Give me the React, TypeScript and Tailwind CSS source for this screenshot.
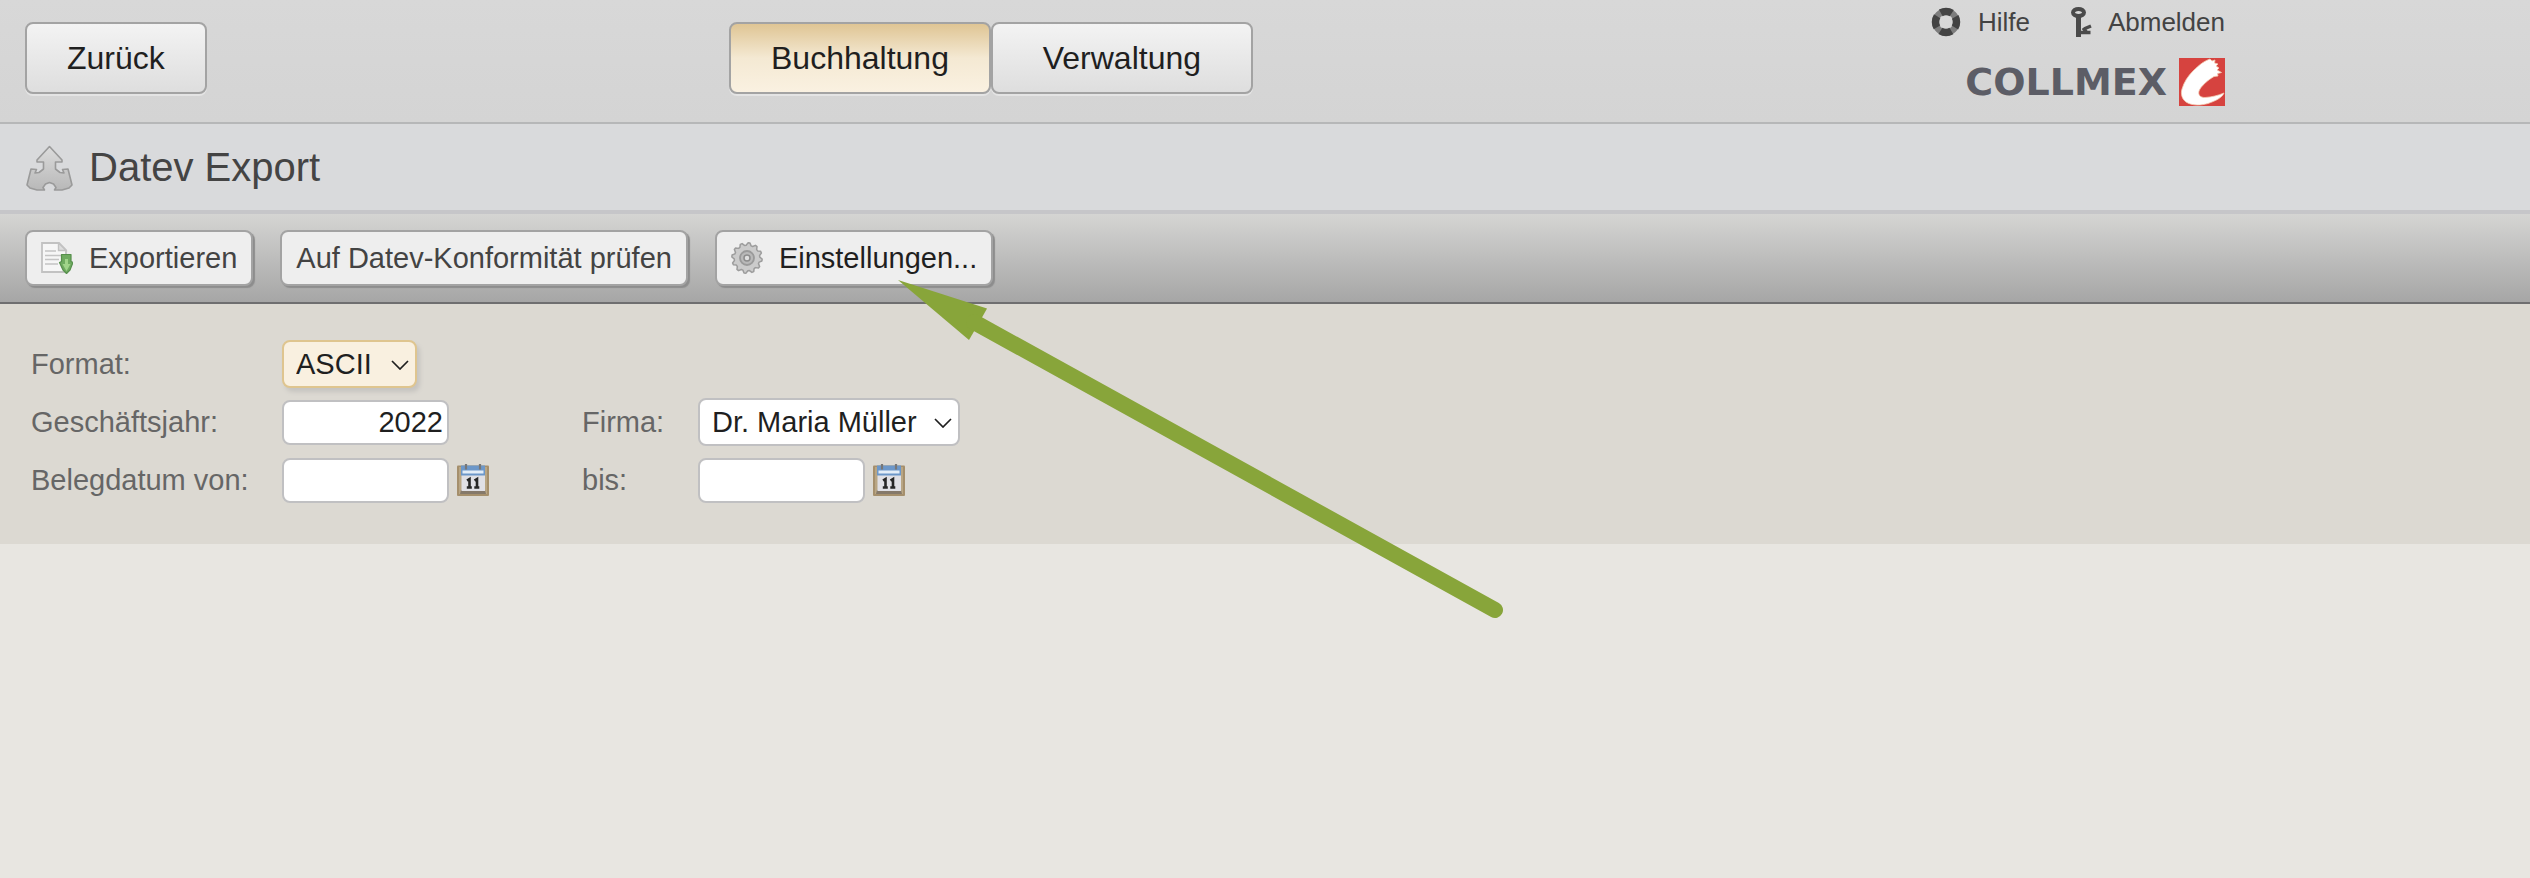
import type { ReactNode } from "react";

function LifebuoyIcon() {
  return (
    <svg className="size-8" viewBox="0 0 32 32" fill="none" aria-hidden="true">
      <circle cx="16" cy="16" r="10.5" stroke="#7d7d7d" strokeWidth="6.500" />
      <circle
        cx="16"
        cy="16"
        r="10.5"
        stroke="#434343"
        strokeWidth="7.500"
        strokeDasharray="11.5 4.993"
        strokeDashoffset="5.75"
      />
    </svg>
  );
}

function KeyIcon() {
  return (
    <svg className="size-8" viewBox="0 0 32 32" fill="none" stroke="#4a4a4a" aria-hidden="true">
      <ellipse cx="12.500" cy="6.500" rx="5.500" ry="3.600" strokeWidth="4" />
      <path d="M12.500 10v21" strokeWidth="5" />
      <path d="M14 26.500h10.500M17 22l3.500 4M25 20l-6 2.500" strokeWidth="3.400" />
    </svg>
  );
}

function LogoMark() {
  return (
    <svg className="h-12 w-[46px]" viewBox="0 0 46 48" aria-hidden="true">
      <rect width="46" height="48" fill="#d6433f" />
      <path
        d="M31 1 33 3 36 2 35.500 5 39 6 37 8 40 10 38 12 42.500 14.500 38.500 15.500 39 18 35 18.500C29 22 22 28 20 33 19 37 21 39.500 26 39.500 33 39 39 37.500 45 35 43 40 36 43 29 45.500 22 47.500 13 48 7 44 3 41 1.500 36 3 31 5 24 9 18 14 13 20 7 25 3 31 1Z"
        fill="#fff"
        stroke="#f4cdb4"
        strokeWidth=".8"
      />
    </svg>
  );
}

function ExportArrowsIcon() {
  return (
    <svg className="size-12" viewBox="0 0 48 48" aria-hidden="true">
      <defs>
        <linearGradient id="arrows" x1="0" y1="0" x2="0" y2="1">
          <stop offset="0" stopColor="#dcdcdc" />
          <stop offset="1" stopColor="#b8b8b8" />
        </linearGradient>
      </defs>
      <path
        d="M24.500 3.500 37 17V19H30.500V26L35 29.500 39 30 37.500 26.500 43 26 47 42 44 45 37 47H29.500L31 44.500 28.500 41 24.500 39.500 20.500 41 18 44.500 19.500 47H12L5 45 2 42 6 26 11.500 26.500 10 30 14 29.500 18.500 26V19H12V17Z"
        fill="url(#arrows)"
        stroke="#9a9a9a"
        strokeWidth="1.600"
        strokeLinejoin="round"
      />
    </svg>
  );
}

function DocumentExportIcon() {
  return (
    <svg className="size-8" viewBox="0 0 32 32" aria-hidden="true">
      <path d="M1 1h17l7 7v22H1Z" fill="#f6f6f6" stroke="#c2c2c2" strokeWidth="1.800" />
      <path d="M17.500 1v7.500H25Z" fill="#ddd" stroke="#c2c2c2" strokeWidth="1.400" />
      <path d="M4 9h11M4 13.500h16M4 17.500h14M4 22h13" stroke="#c4c4c4" strokeWidth="1.700" />
      <path
        d="M20.500 12.500H30V19.500L32 20.500 29 28 25.500 31.500 22 28 18.500 20.500 20.500 19.500Z"
        fill="#6fab60"
        stroke="#568f4c"
        strokeWidth="1.200"
        strokeLinejoin="round"
      />
      <path d="M24 17H27V22H29.500L25.500 29 21.500 22H24Z" fill="#a0d489" />
    </svg>
  );
}

const GEAR_TEETH = 12;
const gearOutline = Array.from({ length: GEAR_TEETH * 4 }, (_, i) => {
  const angle = ((i + 0.5) / (GEAR_TEETH * 4)) * Math.PI * 2;
  const radius = i % 4 < 2 ? 15.2 : 12.8;
  return `${(16 + radius * Math.cos(angle)).toFixed(2)},${(16 + radius * Math.sin(angle)).toFixed(2)}`;
}).join(" ");

function GearIcon() {
  return (
    <svg className="size-8" viewBox="0 0 32 32" fill="none" aria-hidden="true">
      <polygon points={gearOutline} fill="#cbcbcb" stroke="#9c9c9c" strokeWidth="1.500" strokeLinejoin="round" />
      <circle cx="16" cy="16" r="7" fill="#b9b9b9" stroke="#9a9a9a" strokeWidth="1.800" />
      <circle cx="16" cy="16" r="3" fill="#dedede" stroke="#8c8c8c" strokeWidth="1.500" />
    </svg>
  );
}

function CalendarIcon() {
  return (
    <svg className="size-8" viewBox="0 0 32 32" aria-hidden="true">
      <rect y="1.500" width="32" height="30.500" rx="1" fill="#a58f6c" />
      <rect x="2" y="3" width="28" height="27" fill="#b9a684" />
      <path d="M4 26h24l1 4H3Z" fill="#85796a" />
      <rect x="4.500" y="2" width="23.500" height="25" fill="#e0e0e5" />
      <rect x="4" y="1.500" width="24" height="10" fill="#6c97c9" />
      <rect x="5.500" y="6.500" width="21" height="3" fill="#e3edf7" />
      <path d="M9 0v5.500M23 0v5.500" stroke="#777" strokeWidth="2.200" />
      <path
        d="M10 16.500l2.500-1.500v8.500M9.800 23.500h5M17.500 16.500l2.500-1.500v8.500M17.300 23.500h5"
        fill="none"
        stroke="#262626"
        strokeWidth="2.600"
      />
    </svg>
  );
}

function NavButton({ children, active = false }: { children: ReactNode; active?: boolean }) {
  const tone = active
    ? "bg-linear-to-b from-[#dfc594] via-[#f4e9d3] via-50% to-[#faf1e1]"
    : "bg-linear-to-b from-[#f3f3f3] to-[#dedede]";
  return (
    <button
      type="button"
      className={`h-[72px] rounded-lg border-2 border-[#a3a3a3] px-10 text-[32px] leading-9 text-[#1f1f1f] shadow-[0_2px_0_#e4e4e4] ${tone}`}
    >
      {children}
    </button>
  );
}

function ToolButton({ children, icon, hovered = false }: { children: ReactNode; icon?: ReactNode; hovered?: boolean }) {
  return (
    <button
      type="button"
      className={`flex h-14 items-center gap-4 rounded-lg border-2 border-[#a3a3a3] bg-[#eee] px-3.5 leading-8 shadow-[2px_2px_1px_#8d8d8d] ${
        hovered ? "text-[#1f1f1f]" : "text-[#434343]"
      }`}
    >
      {icon}
      {children}
    </button>
  );
}

function Dropdown({ id, value, className }: { id: string; value: string; className: string }) {
  return (
    <div className="relative">
      <select
        id={id}
        defaultValue={value}
        className={`block h-12 appearance-none rounded-lg border-2 pl-3 leading-8 text-[#1f1f1f] ${className}`}
      >
        <option>{value}</option>
      </select>
      <svg
        className="pointer-events-none absolute top-5 right-2 h-2.5 w-[18px]"
        viewBox="0 0 18 10"
        fill="none"
        stroke="#1f1f1f"
        strokeWidth="1.700"
        aria-hidden="true"
      >
        <path d="M1 1l8 8 8-8" />
      </svg>
    </div>
  );
}

function TextField({ id, value }: { id: string; value?: string }) {
  return (
    <input
      id={id}
      type="text"
      defaultValue={value}
      className="h-[45px] w-[167px] rounded-lg border-2 border-[#c0c0c2] bg-white px-1 text-right leading-8 text-[#1f1f1f]"
    />
  );
}

function DateField({ id, label }: { id: string; label: string }) {
  return (
    <div className="flex items-center gap-2">
      <TextField id={id} />
      <button type="button" aria-label={label}>
        <CalendarIcon />
      </button>
    </div>
  );
}

export default function App() {
  return (
    <div className="relative min-h-screen overflow-x-hidden bg-[#e8e6e1] font-['Liberation_Sans',Arial,sans-serif] text-[29px] leading-8">
      <header className="border-b-2 border-[#b6b7b8] bg-linear-to-b from-[#d8d8d8] to-[#d4d4d4] px-[25px]">
        <div className="grid h-[122px] max-w-[2200px] grid-cols-[32%_1fr_auto]">
          <div className="pt-[22px]">
            <NavButton>Zurück</NavButton>
          </div>
          <nav className="flex pt-[22px]">
            <div className="grid grid-cols-2 self-start">
              <NavButton active>Buchhaltung</NavButton>
              <NavButton>Verwaltung</NavButton>
            </div>
          </nav>
          <div className="flex flex-col items-end gap-4 pt-1.5">
            <div className="flex h-8 items-center gap-9 text-[26px] text-[#434343]">
              <a href="#hilfe" className="flex items-center gap-4">
                <LifebuoyIcon />
                Hilfe
              </a>
              <a href="#abmelden" className="flex items-center gap-2.5">
                <KeyIcon />
                Abmelden
              </a>
            </div>
            <a
              href="#start"
              className="flex h-14 items-center gap-3 font-['DejaVu_Sans',sans-serif] text-[38px] leading-10 font-bold text-[#5c5d66]"
            >
              COLLMEX
              <LogoMark />
            </a>
          </div>
        </div>
      </header>

      <div className="flex h-[90px] items-center gap-4 border-b-4 border-[#c6c6c9] bg-[#d9dadc] px-[25px]">
        <ExportArrowsIcon />
        <h1 className="text-[40px] leading-[48px] text-[#444]">Datev Export</h1>
      </div>

      <div className="flex h-[90px] items-start gap-[27px] border-b-2 border-[#6f6f70] bg-linear-to-b from-[#d5d5d3] to-[#a6a6a6] px-[25px] pt-4">
        <ToolButton icon={<DocumentExportIcon />}>Exportieren</ToolButton>
        <ToolButton>Auf Datev-Konformität prüfen</ToolButton>
        <ToolButton icon={<GearIcon />} hovered>
          Einstellungen...
        </ToolButton>
      </div>

      <form className="grid auto-rows-[58px] grid-cols-[251px_300px_116px_1fr] items-center bg-[#dcd9d2] px-[31px] pt-[31px] pb-[35px] text-[#666]">
        <label htmlFor="format">Format:</label>
        <div className="col-span-3 flex">
          <Dropdown
            id="format"
            value="ASCII"
            className="w-[135px] border-[#dfc58f] bg-[#f9f0e0] shadow-[3px_4px_4px_#c6c4c0]"
          />
        </div>

        <label htmlFor="geschaeftsjahr">Geschäftsjahr:</label>
        <TextField id="geschaeftsjahr" value="2022" />
        <label htmlFor="firma">Firma:</label>
        <div className="flex">
          <Dropdown id="firma" value="Dr. Maria Müller" className="w-[262px] border-[#c0c0c2] bg-white" />
        </div>

        <label htmlFor="von">Belegdatum von:</label>
        <DateField id="von" label="Datum von wählen" />
        <label htmlFor="bis">bis:</label>
        <DateField id="bis" label="Datum bis wählen" />
      </form>

      <svg
        className="pointer-events-none absolute top-[280px] left-[898px] h-[340px] w-[606px]"
        viewBox="0 0 606 340"
        fill="none"
        aria-hidden="true"
      >
        <path d="M0 0 89 28.500 80 44.500 71 60Z" fill="#88a53a" />
        <path d="M76 42 597 330" stroke="#88a53a" strokeWidth="16" strokeLinecap="round" />
      </svg>
    </div>
  );
}
